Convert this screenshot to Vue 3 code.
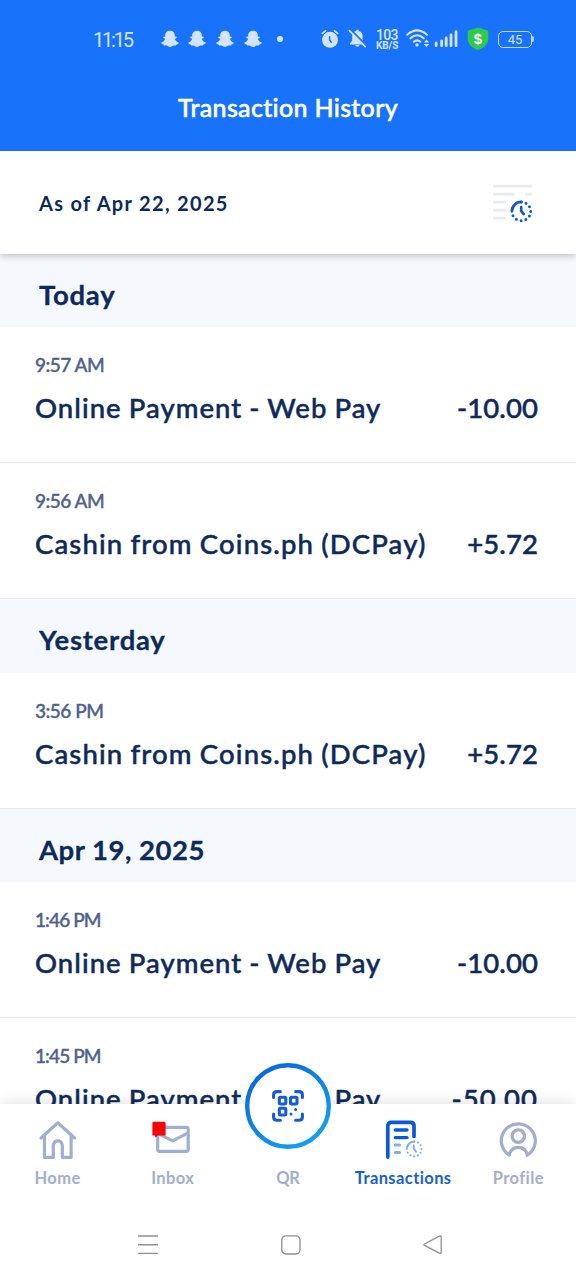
<script setup>
const groups = [
  {
    label: 'Today',
    kind: 'today',
    rows: [
      { time: '9:57 AM', title: 'Online Payment - Web Pay', amount: '-10.00' },
      { time: '9:56 AM', title: 'Cashin from Coins.ph (DCPay)', amount: '+5.72' }
    ]
  },
  {
    label: 'Yesterday',
    kind: 'yesterday',
    rows: [{ time: '3:56 PM', title: 'Cashin from Coins.ph (DCPay)', amount: '+5.72' }]
  },
  {
    label: 'Apr 19, 2025',
    kind: 'date',
    rows: [
      { time: '1:46 PM', title: 'Online Payment - Web Pay', amount: '-10.00' },
      { time: '1:45 PM', title: 'Online Payment - Web Pay', amount: '-50.00' }
    ]
  }
]
</script>

<template>
  <div class="screen">
    <header class="top">
      <div class="status">
        <span class="clock">11:15</span>
        <div class="snaps">
          <svg v-for="n in 4" :key="n" width="18" height="18" viewBox="0 0 18 18">
            <path d="M9 .7C6 .7 4.2 2.7 4.2 5.3V6.8L2.6 6.6 2.2 7.7 4.2 9C3.7 10.6 2.5 11.8.4 12.5L.5 13.8 2.5 14.4 3.2 15.6 5.7 15.5C6.9 16.2 7.8 17 9 17S11.1 16.2 12.3 15.5L14.8 15.6 15.5 14.4 17.5 13.8 17.6 12.5C15.5 11.8 14.3 10.6 13.8 9L15.8 7.7 15.4 6.6 13.8 6.8V5.3C13.8 2.7 12 .7 9 .7Z" fill="#d3e4ff" />
          </svg>
        </div>
        <i class="dot"></i>
        <svg class="alarm" width="18" height="20" viewBox="0 0 18 20">
          <circle cx="9" cy="10.8" r="8" fill="#d3e4ff" />
          <path d="M1.4 4.4 4.4 1.9M16.6 4.4 13.6 1.9" stroke="#d3e4ff" stroke-width="1.7" stroke-linecap="round" />
          <path d="M8.6 7.8V11L10.3 13.2" fill="none" stroke="#1972fa" stroke-width="1.5" stroke-linecap="round" />
        </svg>
        <svg class="bell" width="19" height="20" viewBox="0 0 19 20">
          <path d="M8 2C8 .4 10.8.4 10.8 2 13.5 2.6 14.6 4.6 14.6 6.8V11.4L17 14.3V15.4H2V14.3L4.2 11.4V6.8C4.2 4.6 5.3 2.6 8 2ZM7.3 16.1H11.5C11.3 18.3 7.5 18.3 7.3 16.1Z" fill="#d3e4ff" />
          <path d="M2.4.6 18.4 16.6" stroke="#1972fa" stroke-width="2" />
          <path d="M1.4 1.6 17.2 17.6" stroke="#d3e4ff" stroke-width="1.6" stroke-linecap="round" />
        </svg>
        <span class="speed"><b>103</b><small>KB/S</small></span>
        <svg class="wifi" width="25" height="20" viewBox="0 0 25 20">
          <g fill="none" stroke="#d3e4ff" stroke-width="2.1" stroke-linecap="round">
            <path d="M1.3 5.7Q11 -2.8 20.9 5.7M4.5 9.3Q11 3.2 17.7 9.3M7.8 12.7Q11 9.9 14.3 12.7" />
          </g>
          <circle cx="11" cy="15.9" r="1.7" fill="#d3e4ff" />
          <path d="M17.8 13.6 20.5 10.6 23.2 13.6ZM17.8 15 20.5 18 23.2 15Z" fill="#d3e4ff" />
        </svg>
        <svg class="bars" width="24" height="18" viewBox="0 0 24 18">
          <path d="M2.1 15.7V13M7.7 15.7V10.8M12.2 15.7V8M17 15.7V4.8M22 15.7V1.6" stroke="#d3e4ff" stroke-width="2.8" stroke-linecap="round" />
        </svg>
        <svg class="shield" width="22" height="24" viewBox="0 0 22 24">
          <path d="M11 .6 20.6 3.4Q21.3 3.6 21.3 4.6V11.6C21.3 17.6 16.5 21.3 11 23 5.5 21.3.7 17.6.7 11.6V4.6Q.7 3.6 1.4 3.4Z" fill="#2fc94e" />
          <text x="11" y="16.8" text-anchor="middle" class="dollar">$</text>
        </svg>
        <span class="battery">45</span>
      </div>
      <h1>Transaction History</h1>
    </header>

    <section class="asof">
      <span>As of Apr 22, 2025</span>
      <svg width="42" height="42" viewBox="0 0 42 42">
        <path d="M1 3.2H40M1 11.2H20L22 12.4M33 11.2H40M1 19.2H14M1 27.2H14M1 35.2H14" fill="none" stroke="#e8ecef" stroke-width="2.8" />
        <path d="M29.3 18.9A9.4 9.4 0 1 1 19.9 28.3" fill="none" stroke="#1159cf" stroke-width="3" stroke-linecap="round" stroke-dasharray="0 4.92" />
        <path d="M19.9 28.3A9.4 9.4 0 0 1 29.3 18.9" fill="none" stroke="#1159cf" stroke-width="2.9" stroke-linecap="round" />
        <path d="M29.2 24.2V28.2L31.7 31" fill="none" stroke="#1159cf" stroke-width="2.7" stroke-linecap="round" stroke-linejoin="round" />
      </svg>
    </section>

    <main class="list">
      <section v-for="g in groups" :key="g.label">
        <h2 :class="g.kind">{{ g.label }}</h2>
        <article v-for="r in g.rows" :key="r.time">
          <time :class="{ narrow: r.time.startsWith('1:') }">{{ r.time }}</time>
          <div class="line">
            <span :class="['title', { cash: r.title.startsWith('Cashin') }]">{{ r.title }}</span>
            <span :class="['amount', { wide: r.amount.startsWith('-5') }]">{{ r.amount }}</span>
          </div>
        </article>
      </section>
    </main>

    <nav class="tabs">
      <a class="tab home">
        <svg width="40" height="40" viewBox="0 0 40 40">
          <path d="M3 18 19.8 2.8 36.6 18M6.5 16.3V37.3H15.3V25.3A4.6 5.5 0 0 1 24.3 25.3V37.3H33.1V16.3" fill="none" stroke="#9fafd0" stroke-width="3.2" stroke-linejoin="round" stroke-linecap="round" />
        </svg>
        <span>Home</span>
      </a>
      <a class="tab inbox">
        <svg width="40" height="40" viewBox="0 0 40 40">
          <rect x="4.7" y="7.4" width="30.5" height="24" rx="1.8" fill="none" stroke="#9fafd0" stroke-width="3.2" />
          <path d="M5 13.6 19.7 20.9 35 12.8" fill="none" stroke="#9fafd0" stroke-width="3" stroke-linejoin="round" />
          <path d="M.8 1.8H11.2Q12.6 1.8 12.6 3.2V15.5H4.4L2.8 17.8 1.6 15.6H-.6V3.2Q-.6 1.8 .8 1.8Z" fill="#f50508" />
        </svg>
        <span>Inbox</span>
      </a>
      <a class="tab qr">
        <svg class="scan" width="86" height="86" viewBox="0 0 86 86">
          <defs>
            <linearGradient id="ring" x1="0.1" y1="0" x2="0.8" y2="1">
              <stop offset="0" stop-color="#0765df" />
              <stop offset="1" stop-color="#15a1f1" />
            </linearGradient>
          </defs>
          <circle cx="43" cy="43" r="40.8" fill="#fff" stroke="url(#ring)" stroke-width="4.4" />
          <g fill="none" stroke="#155dd3" stroke-width="3.1" stroke-linecap="round" stroke-linejoin="round">
            <path d="M28.6 34.4V32Q28.6 28.6 32 28.6H35.4M50.6 28.6H54Q57.4 28.6 57.4 32V34.4M28.6 51V53.9Q28.6 57.2 32 57.2H35.4M50.6 57.2H54Q57.4 57.2 57.4 53.9V51" />
            <rect x="34.3" y="34.3" width="6.5" height="6.7" rx="1.2" />
            <rect x="45.5" y="34.3" width="6.5" height="6.7" rx="1.2" />
            <rect x="34.3" y="45.3" width="6.5" height="6.7" rx="1.2" />
          </g>
          <circle cx="46" cy="50.9" r="1.5" fill="#155dd3" />
          <circle cx="50.6" cy="46.4" r="1.5" fill="#155dd3" />
        </svg>
        <span>QR</span>
      </a>
      <a class="tab trans">
        <svg width="40" height="40" viewBox="0 0 40 40">
          <path d="M4.8 37.1V5.8Q4.8 2.4 8.3 2.4H27.3Q31 2.4 31 5.8V16.4" fill="none" stroke="#0d58d6" stroke-width="3.7" stroke-linecap="round" />
          <path d="M12.3 10H24M12.3 17.6H24" stroke="#0d58d6" stroke-width="3.4" stroke-linecap="round" />
          <path d="M12.3 25H16.6M12.3 32.4H16.6" stroke="#86aeea" stroke-width="3" stroke-linecap="round" />
          <path d="M31.2 21.6A7.4 7.4 0 1 1 23.8 29" fill="none" stroke="#86aeea" stroke-width="2.2" stroke-linecap="round" stroke-dasharray="0 3.87" />
          <path d="M23.8 29A7.4 7.4 0 0 1 31.2 21.6M30.8 25.4V28.8L33 31.6" fill="none" stroke="#86aeea" stroke-width="2" stroke-linecap="round" />
        </svg>
        <span>Transactions</span>
      </a>
      <a class="tab profile">
        <svg width="40" height="40" viewBox="0 0 40 40">
          <path d="M11.3 35.2A17 17 0 1 1 29.3 35.2C28.2 30.1 25 27.4 20.3 27.4S12.4 30.1 11.3 35.2Z" fill="none" stroke="#a2aecb" stroke-width="3.3" stroke-linejoin="round" />
          <circle cx="20.3" cy="16.1" r="6.2" fill="none" stroke="#a2aecb" stroke-width="3.3" />
        </svg>
        <span>Profile</span>
      </a>
    </nav>

    <footer class="system">
      <svg class="menu" width="20" height="20" viewBox="0 0 20 20">
        <path d="M0 1H20M0 9.7H20M0 18.4H20" stroke="#8f8f8f" stroke-width="1.4" />
      </svg>
      <svg class="square" width="20" height="20" viewBox="0 0 20 20">
        <rect x=".8" y=".8" width="18.2" height="18.2" rx="4.2" fill="none" stroke="#8f8f8f" stroke-width="1.3" />
      </svg>
      <svg class="back" width="20" height="20" viewBox="0 0 20 20">
        <path d="M1.5 9 16.3 1.2Q18.2.5 18.2 2.2V17.3Q18.2 19 16.3 18.2L1.5 10.4Q.2 9.7 1.5 9Z" fill="none" stroke="#8f8f8f" stroke-width="1.3" />
      </svg>
    </footer>
  </div>
</template>

<style>
body { margin: 0; }
</style>

<style scoped>
.screen {
  width: 576px;
  height: 1280px;
  overflow: hidden;
  display: flex;
  flex-direction: column;
  background: #fff;
  color: #0e2a5a;
  font-family: Lato, "Open Sans", sans-serif;
  font-variant-ligatures: none;
}
svg { display: block; flex: none; }
.inbox svg { overflow: visible; }
.top { height: 151px; flex: none; background: #1972fa; }
.status {
  height: 78px;
  box-sizing: border-box;
  padding-left: 93px;
  display: flex;
  align-items: center;
  color: #d3e4ff;
}
.clock { width: 40px; font: 400 20px/24px Roboto, sans-serif; letter-spacing: -2.2px; white-space: nowrap; margin-top: 2px; }
.snaps { display: flex; gap: 9.7px; margin-left: 27.5px; }
.dot { width: 6px; height: 6px; border-radius: 50%; background: #d3e4ff; margin-left: 15.5px; flex: none; }
.alarm { margin-left: 37.5px; }
.bell { margin-left: 9px; }
.speed { width: 23px; margin-left: 9.5px; display: flex; flex-direction: column; font-family: Roboto, sans-serif; }
.speed b { font-size: 14px; line-height: 12px; font-weight: 500; letter-spacing: -0.7px; }
.speed small { font-size: 10px; line-height: 9px; font-weight: 700; letter-spacing: -0.1px; white-space: nowrap; }
.wifi { margin-left: 6.5px; }
.bars { margin-left: 3.5px; }
.shield { margin-left: 8.5px; }
.dollar { font: 700 15px "Liberation Sans", sans-serif; fill: #fff; }
.battery {
  box-sizing: border-box;
  width: 34px;
  height: 17px;
  margin-left: 9.5px;
  border: 1.4px solid #bcd6ff;
  border-radius: 5px;
  font: 400 13px/15px Roboto, sans-serif;
  text-align: center;
  position: relative;
}
.battery::after {
  content: "";
  position: absolute;
  right: -3.4px;
  top: 4px;
  width: 2px;
  height: 6px;
  border-radius: 0 2px 2px 0;
  background: #bcd6ff;
}
h1 {
  margin: 13px 0 0;
  font-size: 25px;
  line-height: 32px;
  font-weight: 500;
  letter-spacing: 0.32px;
  text-align: center;
  color: #fff;
  -webkit-text-stroke: 0.5px #fff;
}
.asof {
  height: 102.5px;
  flex: none;
  box-sizing: border-box;
  padding: 2px 42px 0 39px;
  display: flex;
  align-items: center;
  justify-content: space-between;
  background: #fff;
  box-shadow: 0 1px 8px rgba(0, 0, 0, 0.28);
  clip-path: inset(0 0 -20px 0);
  z-index: 1;
  font-size: 20px;
  font-weight: 700;
  letter-spacing: 1.32px;
}
.asof svg { margin-top: 2px; }
.list { height: 850.5px; flex: none; overflow: hidden; }
h2 {
  margin: 0;
  height: 73.5px;
  padding: 0 39px;
  font-size: 27.5px;
  line-height: 81px;
  font-weight: 700;
  letter-spacing: 0.75px;
  background: #f5f9fe;
  box-sizing: border-box;
  -webkit-text-stroke: 0.3px #0e2a5a;
}
h2.date { letter-spacing: 0.5px; }
article {
  height: 136px;
  box-sizing: border-box;
  border-bottom: 1px solid #e9ebee;
  padding: 26px 38px 0 35px;
}
time {
  display: block;
  font-size: 19px;
  line-height: 23px;
  font-weight: 500;
  letter-spacing: -0.5px;
  color: #50618a;
  -webkit-text-stroke: 0.4px #50618a;
}
time.narrow { letter-spacing: -0.9px; }
.line {
  margin-top: 14px;
  display: flex;
  justify-content: space-between;
  font-size: 27.5px;
  line-height: 36px;
  font-weight: 500;
  white-space: nowrap;
  letter-spacing: 1.05px;
  -webkit-text-stroke: 0.5px #0e2a5a;
}
.title { word-spacing: -1px; }
.cash { letter-spacing: 1.15px; }
.amount { letter-spacing: 0.1px; }
.amount.wide { letter-spacing: 1px; }
.tabs {
  height: 96px;
  flex: none;
  display: grid;
  grid-template-columns: repeat(5, 115.2px);
  background: #fff;
  box-shadow: 0 0 14px rgba(0, 0, 0, 0.15);
  position: relative;
  z-index: 2;
}
.tab {
  display: flex;
  flex-direction: column;
  align-items: center;
  padding-top: 16px;
  font-size: 16.5px;
  font-weight: 700;
  line-height: 20px;
  letter-spacing: 0.4px;
  color: #a2aecb;
}
.tab span { margin-top: 8px; }
.qr svg { margin-top: -57px; }
.qr span { margin-top: 19px; letter-spacing: -0.2px; }
.trans { color: #155fd2; }
.system {
  flex: 1;
  background: #fff;
  position: relative;
  z-index: 3;
  display: flex;
  padding: 35px 0 0 138px;
}
.square { margin-left: 123px; }
.back { margin-left: 122px; }
</style>
